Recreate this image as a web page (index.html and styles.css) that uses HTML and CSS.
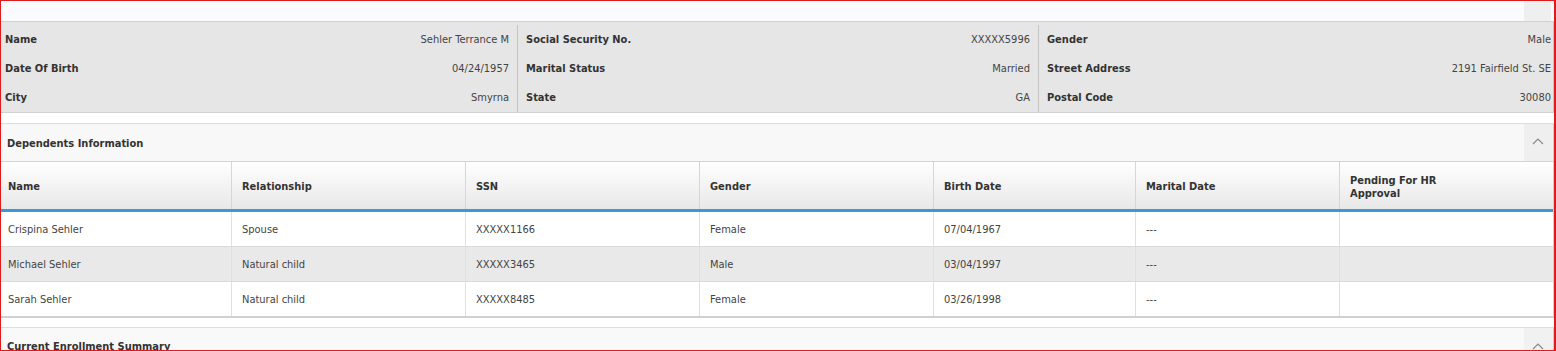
FILE: index.html
```html
<!DOCTYPE html>
<html>
<head>
<meta charset="utf-8">
<link rel="stylesheet" href="styles.css">
</head>
<body>
<div class="frame">
  <div class="topbar">
    <div class="tb-fill"></div>
    <div class="tb-btn"></div>
  </div>

  <div class="info">
    <div class="info-col c1">
      <div class="info-row"><span class="lbl">Name</span><span class="val">Sehler Terrance M</span></div>
      <div class="info-row"><span class="lbl">Date Of Birth</span><span class="val">04/24/1957</span></div>
      <div class="info-row"><span class="lbl">City</span><span class="val">Smyrna</span></div>
    </div>
    <div class="info-col c2">
      <div class="info-row"><span class="lbl">Social Security No.</span><span class="val">XXXXX5996</span></div>
      <div class="info-row"><span class="lbl">Marital Status</span><span class="val">Married</span></div>
      <div class="info-row"><span class="lbl">State</span><span class="val">GA</span></div>
    </div>
    <div class="info-col c3">
      <div class="info-row"><span class="lbl">Gender</span><span class="val">Male</span></div>
      <div class="info-row"><span class="lbl">Street Address</span><span class="val">2191 Fairfield St. SE</span></div>
      <div class="info-row"><span class="lbl">Postal Code</span><span class="val">30080</span></div>
    </div>
  </div>

  <div class="section">
    <div class="sec-head">
      <span class="sec-title">Dependents Information</span>
      <span class="collapse"><svg width="12" height="8" viewBox="0 0 12 8"><polyline points="1,7 6,2 11,7" fill="none" stroke="#8a8a8a" stroke-width="1.2"/></svg></span>
    </div>
    <div class="grid">
      <div class="grow ghead">
        <div class="cell">Name</div>
        <div class="cell">Relationship</div>
        <div class="cell">SSN</div>
        <div class="cell">Gender</div>
        <div class="cell">Birth Date</div>
        <div class="cell">Marital Date</div>
        <div class="cell">Pending For HR<br>Approval</div>
      </div>
      <div class="grow">
        <div class="cell">Crispina Sehler</div>
        <div class="cell">Spouse</div>
        <div class="cell">XXXXX1166</div>
        <div class="cell">Female</div>
        <div class="cell">07/04/1967</div>
        <div class="cell">---</div>
        <div class="cell"></div>
      </div>
      <div class="grow alt">
        <div class="cell">Michael Sehler</div>
        <div class="cell">Natural child</div>
        <div class="cell">XXXXX3465</div>
        <div class="cell">Male</div>
        <div class="cell">03/04/1997</div>
        <div class="cell">---</div>
        <div class="cell"></div>
      </div>
      <div class="grow last">
        <div class="cell">Sarah Sehler</div>
        <div class="cell">Natural child</div>
        <div class="cell">XXXXX8485</div>
        <div class="cell">Female</div>
        <div class="cell">03/26/1998</div>
        <div class="cell">---</div>
        <div class="cell"></div>
      </div>
    </div>
  </div>

  <div class="sec-head next">
    <span class="sec-title">Current Enrollment Summary</span>
    <span class="collapse"><svg width="12" height="8" viewBox="0 0 12 8"><polyline points="1,7 6,2 11,7" fill="none" stroke="#8a8a8a" stroke-width="1.2"/></svg></span>
  </div>
</div>
</body>
</html>
```

FILE: styles.css
```css
html, body {
  margin: 0;
  padding: 0;
  background: #ffffff;
}

body {
  font-family: "DejaVu Sans Condensed", "Liberation Sans", sans-serif;
  font-size: 11px;
  color: #444444;
}

.frame {
  box-sizing: border-box;
  width: 1556px;
  height: 351px;
  overflow: hidden;
  border: 1px solid #e01b1b;
  border-right-width: 2px;
  background: #ffffff;
}

.topbar {
  display: flex;
  height: 20px;
  border-bottom: 1px solid #d2d2d2;
  background: #fbfbfd;
}

.tb-fill {
  flex: 1;
}

.tb-btn {
  width: 27px;
  margin-right: 3px;
  background: #efefef;
}

.info {
  display: grid;
  grid-template-columns: 517px 521px 1fr;
  background: #e6e6e6;
  border-bottom: 1px solid #d0d0d0;
  border-right: 1px solid #c8c8c8;
  padding: 3px 0 0 0;
  height: 91px;
  box-sizing: border-box;
}

.info-col {
  border-right: 1px solid #c4c4c4;
}

.info-col.c1 { padding: 0 8px 0 4px; }
.info-col.c2 { padding: 0 8px 0 8px; }
.info-col.c3 { padding: 0 2px 0 8px; border-right: none; }

.info-row {
  display: flex;
  justify-content: space-between;
  align-items: center;
  height: 29px;
}

.lbl {
  font-weight: bold;
  color: #333333;
}

.val {
  color: #444444;
}

.section {
  margin-top: 10px;
}

.sec-head {
  display: flex;
  align-items: center;
  justify-content: space-between;
  height: 39px;
  box-sizing: border-box;
  border-top: 1px solid #dedede;
  border-bottom: 1px solid #d4d4d4;
  border-right: 1px solid #cfcfcf;
  background: #f8f8f8;
}

.sec-title {
  padding-left: 6px;
  padding-top: 2px;
  font-weight: bold;
  color: #333333;
}

.collapse {
  display: flex;
  align-items: center;
  justify-content: center;
  width: 29px;
  padding-right: 2px;
  padding-bottom: 3px;
  box-sizing: border-box;
  align-self: stretch;
  background: #efefef;
}

.grid {
  border-right: 1px solid #cfcfcf;
}

.grow {
  display: grid;
  grid-template-columns: 231px 234px 234px 234px 202px 204px 1fr;
  height: 35px;
  box-sizing: border-box;
  border-bottom: 1px solid #dadada;
  background: #ffffff;
}

.grow.alt {
  background: #e9e9e9;
}

.grow.last {
  border-bottom: 2px solid #d0d0d0;
  height: 36px;
}

.cell {
  display: flex;
  align-items: center;
  padding-left: 10px;
  border-right: 1px solid #e0e0e0;
  box-sizing: border-box;
}

.cell:first-child {
  padding-left: 7px;
}

.cell:last-child {
  border-right: none;
}

.ghead {
  height: 50px;
  border-bottom: 3px solid #3a9ad9;
  background: linear-gradient(#ffffff, #e8e8e8);
  font-weight: bold;
  color: #333333;
  line-height: 13px;
}

.ghead .cell {
  padding-top: 2px;
  border-right-color: #d6d6d6;
}

.sec-head.next {
  margin-top: 9px;
  align-items: flex-start;
  background: #f9f9f9;
}

.sec-head.next .sec-title {
  padding-top: 12px;
}

.sec-head.next .collapse {
  align-items: flex-end;
  padding-bottom: 15px;
  background: #f1f1f1;
}
```
